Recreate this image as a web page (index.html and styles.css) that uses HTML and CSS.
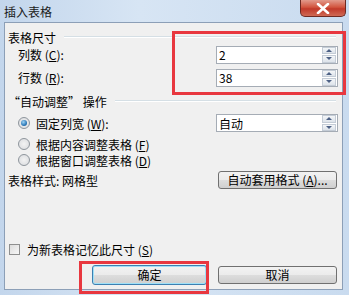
FILE: index.html
```html
<!DOCTYPE html>
<html lang="zh-CN">

<head>
    <meta charset="UTF-8">
    <meta name="viewport" content="width=device-width, initial-scale=1.0">
    <title>插入表格</title>
    <link rel="stylesheet" href="styles.css">
</head>

<body>

    <div class="window">
        <div class="titlebar">
            <span class="title">插入表格</span>
            <div class="close">
                <svg width="14" height="11" viewBox="0 0 14 11">
                    <path d="M2 1 L12 10 M12 1 L2 10" stroke="#fff" stroke-width="2.6" stroke-linecap="round" />
                </svg>
            </div>
        </div>

        <div class="client">
            <div class="group-head">
                <span>表格尺寸</span>
                <div class="line"></div>
            </div>

            <div class="row first">
                <label class="indent">列数 (<u>C</u>):</label>
                <div class="spin">
                    <span>2</span>
                    <div class="arrows"><i class="up"></i><i class="down"></i></div>
                </div>
            </div>

            <div class="row second">
                <label class="indent">行数 (<u>R</u>):</label>
                <div class="spin">
                    <span>38</span>
                    <div class="arrows"><i class="up"></i><i class="down"></i></div>
                </div>
            </div>

            <div class="group-head auto">
                <span>“自动调整” 操作</span>
                <div class="line"></div>
            </div>

            <div class="row radio-row checked-row">
                <label class="indent radio-label"><span class="radio checked"></span>固定列宽 (<u>W</u>):</label>
                <div class="spin">
                    <span>自动</span>
                    <div class="arrows"><i class="up"></i><i class="down"></i></div>
                </div>
            </div>

            <div class="row option">
                <label class="indent radio-label"><span class="radio"></span>根据内容调整表格 (<u>F</u>)</label>
            </div>

            <div class="row option">
                <label class="indent radio-label"><span class="radio"></span>根据窗口调整表格 (<u>D</u>)</label>
            </div>

            <div class="row style-row">
                <label>表格样式: 网格型</label>
                <button class="btn wide">自动套用格式 (<u>A</u>)...</button>
            </div>

            <div class="spacer"></div>

            <div class="row check-row">
                <label class="check-label"><span class="check"></span>为新表格记忆此尺寸 (<u>S</u>)</label>
            </div>

            <div class="button-row">
                <button class="btn ok">确定</button>
                <button class="btn wide">取消</button>
            </div>
        </div>

        <div class="mark mark-size"></div>
        <div class="mark mark-ok"></div>
    </div>

</body>

</html>
```

FILE: styles.css
```css
* {
    box-sizing: border-box;
}

body {
    margin: 0;
    font-family: "Noto Sans CJK SC", "Liberation Sans", sans-serif;
    font-size: 12px;
    color: #000;
}

.window {
    position: relative;
    width: 349px;
    height: 295px;
    background: linear-gradient(90deg, #c3d6ec 0%, #d7e5f4 40%, #c9dbef 100%);
    padding: 0 6px 5px 4px;
    display: flex;
    flex-direction: column;
}

.titlebar {
    height: 22px;
    display: flex;
    align-items: center;
    justify-content: space-between;
}

.title {
    font-size: 12px;
    color: #1a1a1a;
    margin-top: 0;
}

.close {
    width: 46px;
    height: 17px;
    margin-top: -5px;
    margin-right: -3px;
    background: linear-gradient(180deg, #e29a8c 0%, #d2553f 45%, #c1392a 55%, #cf6a55 100%);
    border: 1px solid #6e2a22;
    border-top: none;
    border-radius: 0 0 5px 5px;
    display: flex;
    align-items: center;
    justify-content: center;
}

.client {
    flex: 1;
    background: #f0f0f0;
    border: 1px solid #8c9fb7;
    padding: 5px 4px 0 3px;
    display: flex;
    flex-direction: column;
}

.group-head {
    height: 18px;
    display: flex;
    align-items: center;
    gap: 8px;
}

.group-head .line {
    flex: 1;
    border-top: 1px solid #d5dfe5;
    border-bottom: 1px solid #fff;
    margin-right: 2px;
}

.group-head.auto {
    margin-top: 5px;
}

.row {
    display: flex;
    align-items: center;
    justify-content: space-between;
}

.row.first {
    height: 19px;
    margin-top: -1px;
}

.row.second {
    height: 19px;
    margin-top: 4px;
}

.indent {
    margin-left: 10px;
}

.spin {
    width: 122px;
    height: 18px;
    background: #fff;
    border: 1px solid #a5acb5;
    display: flex;
    align-items: center;
    justify-content: space-between;
    padding-left: 2px;
}

.arrows {
    width: 14px;
    height: 16px;
    margin-right: 1px;
    display: flex;
    flex-direction: column;
    gap: 1px;
}

.arrows i {
    flex: 1;
    background: linear-gradient(180deg, #f4f6f8, #dde3ea);
    border: 1px solid #c4ccd6;
    display: flex;
    align-items: center;
    justify-content: center;
}

.arrows i::after {
    content: "";
    border-left: 3px solid transparent;
    border-right: 3px solid transparent;
}

.arrows .up::after {
    border-bottom: 3px solid #4d6185;
}

.arrows .down::after {
    border-top: 3px solid #4d6185;
}

.radio-row {
    height: 18px;
    margin-top: 4px;
}

.option {
    height: 16px;
    margin-top: 4px;
}

.option + .option {
    margin-top: 0;
}

.radio-label,
.check-label {
    display: flex;
    align-items: center;
}

.radio {
    width: 12px;
    height: 12px;
    border-radius: 50%;
    border: 1px solid #8e959c;
    background: radial-gradient(circle, #f3f3f3 0%, #d8dadd 100%);
    margin-right: 6px;
    display: flex;
    align-items: center;
    justify-content: center;
}

.radio.checked::after {
    content: "";
    width: 6px;
    height: 6px;
    border-radius: 50%;
    background: radial-gradient(circle at 40% 35%, #9fd4f5 0%, #2c79b8 60%, #1a4f82 100%);
}

.style-row {
    height: 18px;
    margin-top: 3px;
}

.btn {
    font-family: inherit;
    font-size: 12px;
    height: 18px;
    padding: 0;
    border: 1px solid #707070;
    border-radius: 3px;
    background: linear-gradient(180deg, #f2f2f2 0%, #ebebeb 50%, #dddddd 51%, #cfcfcf 100%);
    color: #000;
    line-height: 14px;
}

.btn.wide {
    width: 119px;
    margin-right: 1px;
}

.spacer {
    flex: 1;
}

.check-row {
    height: 16px;
}

.check {
    width: 11px;
    height: 11px;
    border: 1px solid #8e8f8f;
    background: linear-gradient(135deg, #dcdcdc, #f7f7f7);
    margin-right: 7px;
    margin-left: 1px;
}

.button-row {
    display: flex;
    justify-content: space-between;
    align-items: center;
    height: 20px;
    margin-top: 8px;
    margin-bottom: 4px;
    padding-left: 84px;
}

.btn.ok {
    width: 115px;
    height: 20px;
    border-color: #3c7fb1;
    box-shadow: inset 0 0 0 1px #9fe0f7;
}

.mark {
    position: absolute;
    border: 3px solid #e8373f;
}

.mark-size {
    left: 172px;
    top: 31px;
    width: 174px;
    height: 64px;
}

.mark-ok {
    left: 79px;
    top: 261px;
    width: 130px;
    height: 33px;
}
```
